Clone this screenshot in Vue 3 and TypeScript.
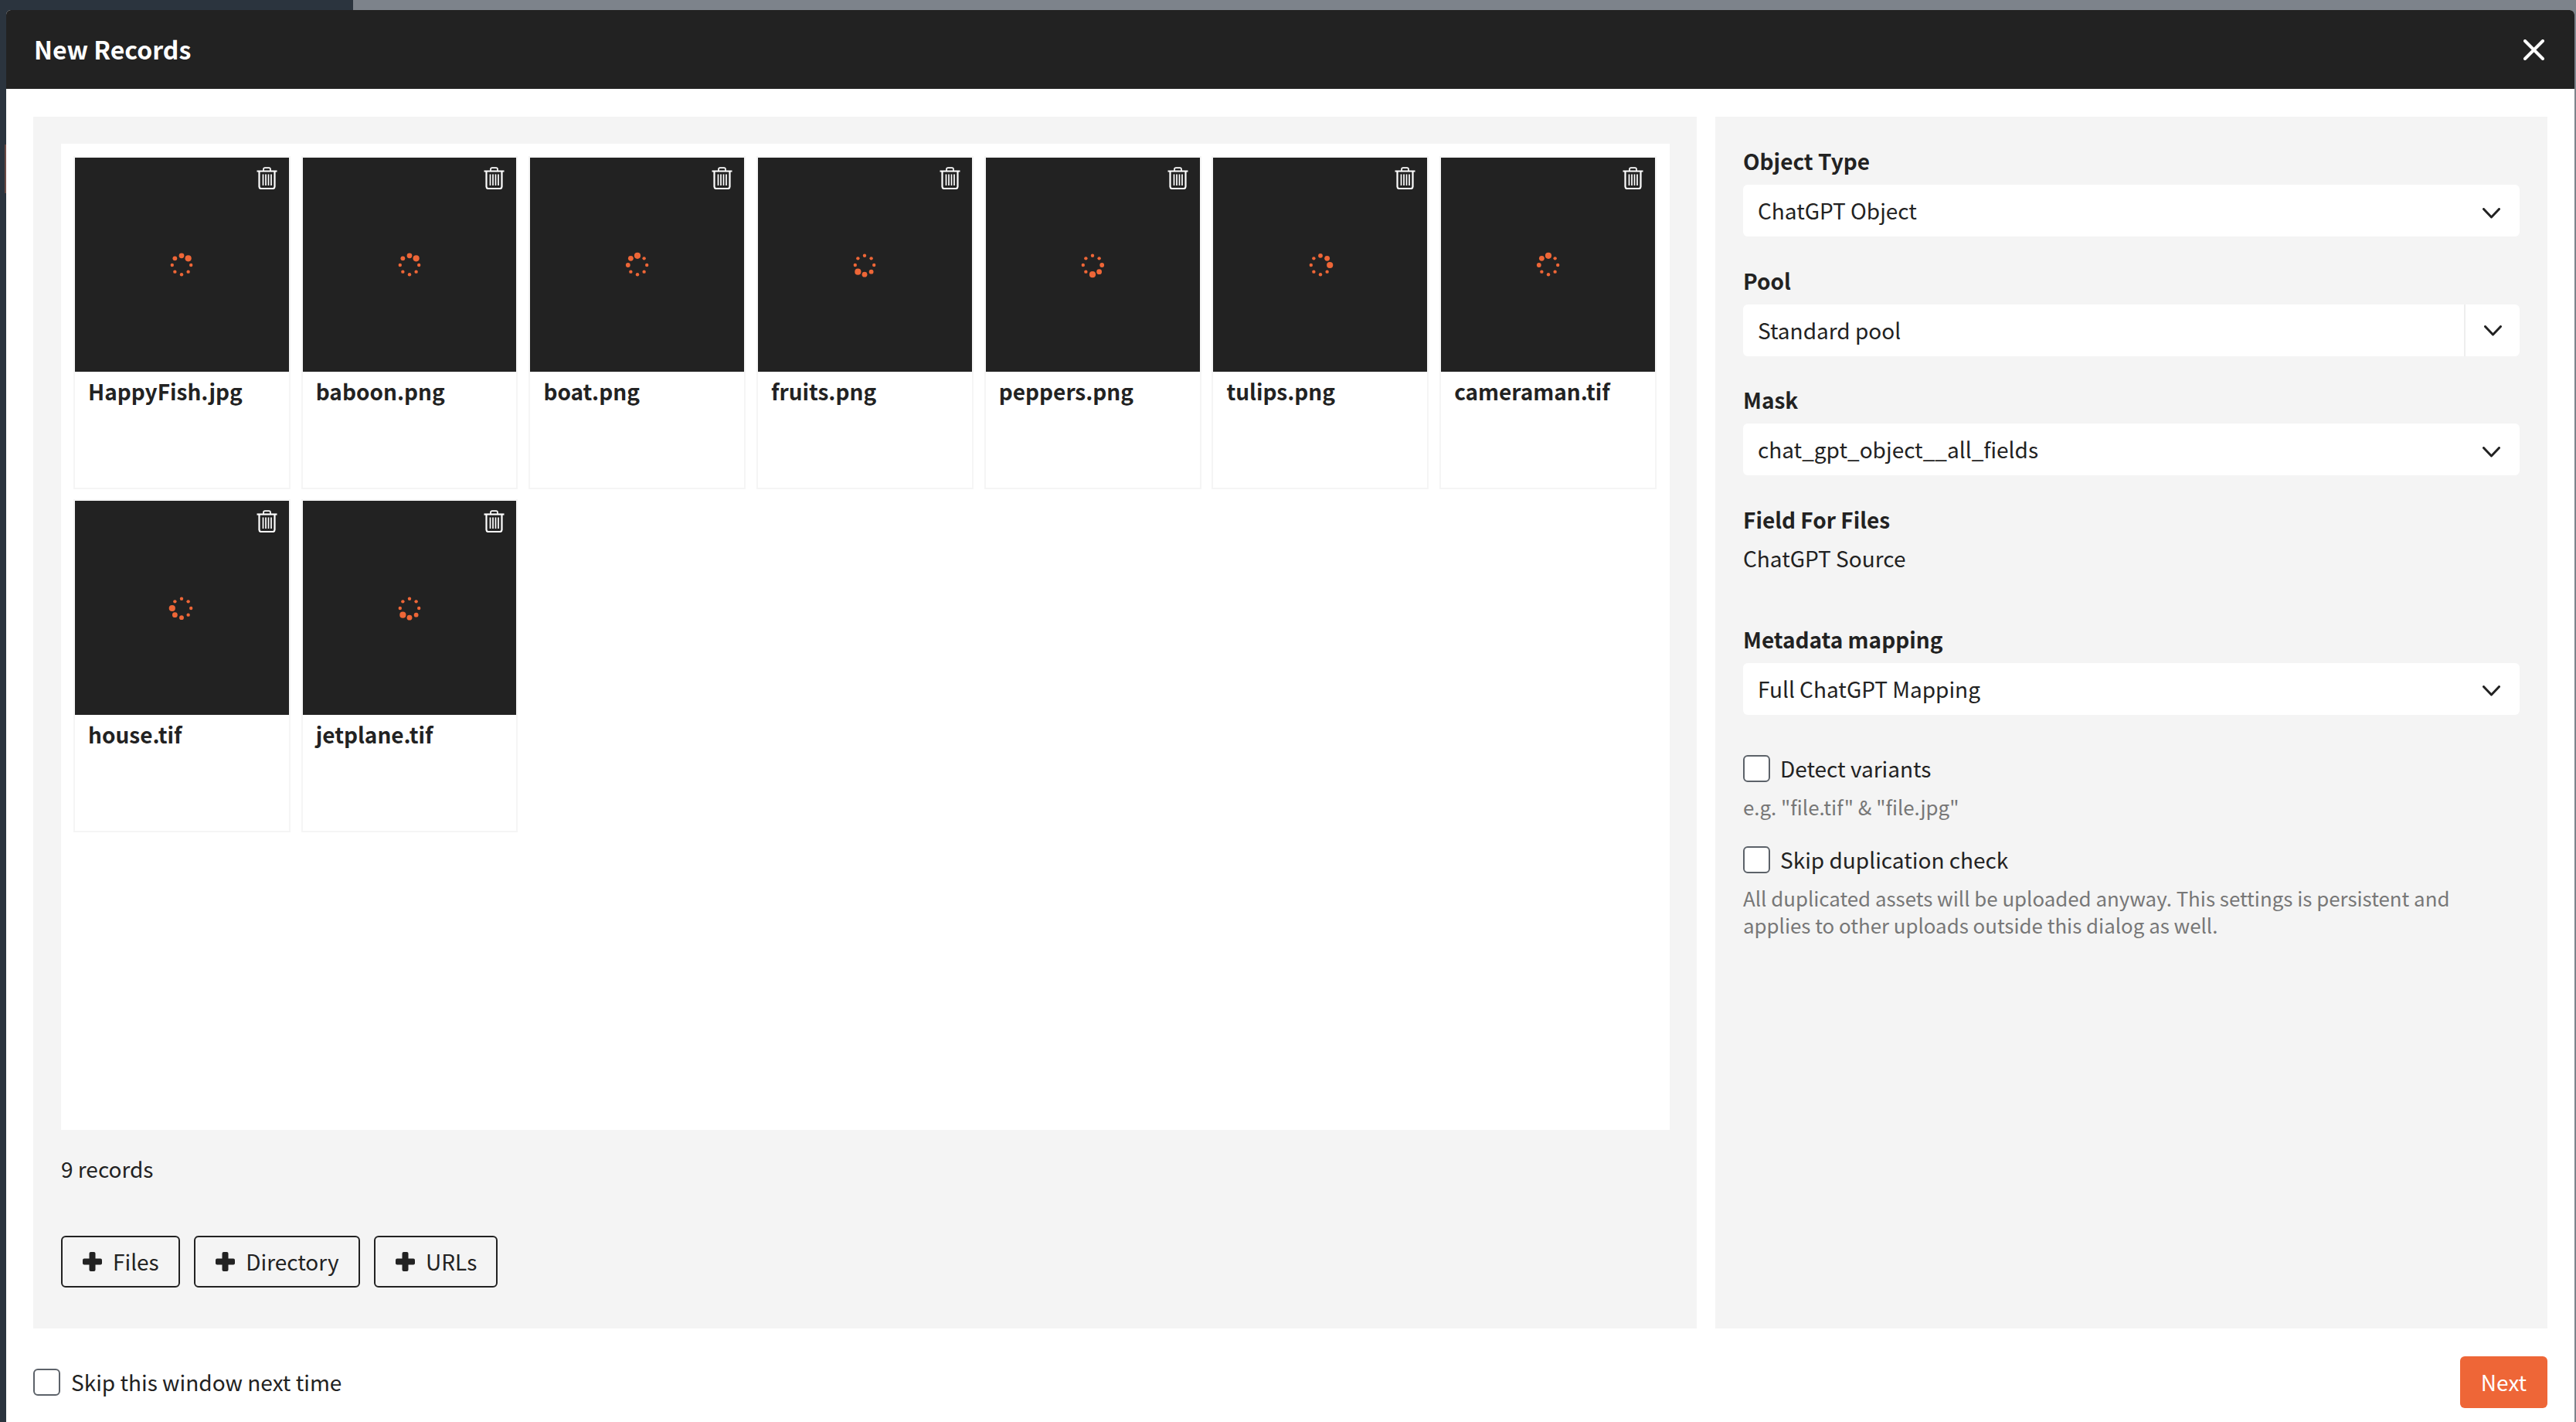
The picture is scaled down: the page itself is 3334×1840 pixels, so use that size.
<template>
  <div class="backdrop">
    <div class="dialog">
      <header class="dialog-head">
        <h1>New Records</h1>
        <svg class="close" viewBox="0 0 27 27" width="27" height="27">
          <path d="M2 2L25 25M25 2L2 25" />
        </svg>
      </header>

      <div class="dialog-body">
        <section class="left">
          <div class="records">
            <div v-for="r in records" :key="r.name" class="card">
              <div class="thumb">
                <svg class="trash" viewBox="0 0 27 29" width="27" height="29">
                  <path class="thin" d="M9 5V3.2Q9 1.2 11 1.2H16Q18 1.2 18 3.2V5" />
                  <path d="M0.5 5.5H26.5" />
                  <path d="M3.5 6V25.5Q3.5 28 6 28H21Q23.5 28 23.5 25.5V6" />
                  <path class="thin" d="M8.5 9.5V24M12 9.5V24M15.5 9.5V24M19 9.5V24" />
                </svg>
                <svg class="spinner" viewBox="-18 -18 36 36" width="36" height="36">
                  <circle
                    v-for="d in spinnerDots(r.head)"
                    :key="d.i"
                    :cx="d.x"
                    :cy="d.y"
                    :r="d.r"
                  />
                </svg>
              </div>
              <div class="name">{{ r.name }}</div>
            </div>
          </div>
          <div class="count">9 records</div>
          <div class="add-row">
            <button v-for="b in addButtons" :key="b" class="add">
              <svg viewBox="0 0 25 25" width="25" height="25">
                <rect x="8.5" y="0" width="8" height="25" rx="2" />
                <rect x="0" y="8.5" width="25" height="8" rx="2" />
              </svg>
              {{ b }}
            </button>
          </div>
        </section>

        <aside class="right">
          <div v-for="f in topSelects" :key="f.label" class="field">
            <label>{{ f.label }}</label>
            <div class="select">
              <span class="value">{{ f.value }}</span>
              <span class="arrow" :class="{ split: f.split }">
                <svg viewBox="0 0 23 14" width="23" height="14"><path d="M1.5 1.5L11.5 12L21.5 1.5" /></svg>
              </span>
            </div>
          </div>

          <div class="field static">
            <label>Field For Files</label>
            <div class="plain">ChatGPT Source</div>
          </div>

          <div class="field mapping">
            <label>Metadata mapping</label>
            <div class="select">
              <span class="value">Full ChatGPT Mapping</span>
              <span class="arrow">
                <svg viewBox="0 0 23 14" width="23" height="14"><path d="M1.5 1.5L11.5 12L21.5 1.5" /></svg>
              </span>
            </div>
          </div>

          <div class="check first">
            <span class="box"></span>
            <span>Detect variants</span>
          </div>
          <p class="hint">e.g. "file.tif" &amp; "file.jpg"</p>

          <div class="check second">
            <span class="box"></span>
            <span>Skip duplication check</span>
          </div>
          <p class="hint">
            All duplicated assets will be uploaded anyway. This settings is persistent and<br />
            applies to other uploads outside this dialog as well.
          </p>
        </aside>
      </div>

      <footer class="dialog-foot">
        <div class="check">
          <span class="box"></span>
          <span>Skip this window next time</span>
        </div>
        <button class="next">Next</button>
      </footer>
    </div>
  </div>
</template>

<script setup lang="ts">
interface RecordItem {
  name: string
  head: number // 0 = top, going clockwise
}

const records: RecordItem[] = [
  { name: 'HappyFish.jpg', head: 1 },
  { name: 'baboon.png', head: 1 },
  { name: 'boat.png', head: 0 },
  { name: 'fruits.png', head: 5 },
  { name: 'peppers.png', head: 4 },
  { name: 'tulips.png', head: 2 },
  { name: 'cameraman.tif', head: 0 },
  { name: 'house.tif', head: 6 },
  { name: 'jetplane.tif', head: 5 }
]

const addButtons = ['Files', 'Directory', 'URLs']

const topSelects = [
  { label: 'Object Type', value: 'ChatGPT Object', split: false },
  { label: 'Pool', value: 'Standard pool', split: true },
  { label: 'Mask', value: 'chat_gpt_object__all_fields', split: false }
]

// spinner frozen at some frame: the head dot is largest, two behind it shrink
const spinnerDots = (head: number) => {
  const sizes = [4.1, 3.4, 2.9]
  return Array.from({ length: 8 }, (_, i) => {
    const behind = (head - i + 8) % 8
    const a = (i * Math.PI) / 4
    return {
      i,
      x: +(Math.sin(a) * 12.2).toFixed(2),
      y: +(-Math.cos(a) * 12.2).toFixed(2),
      r: sizes[behind] ?? 2.2
    }
  })
}
</script>

<style>
body {
  margin: 0;
}
</style>

<style scoped>
.backdrop {
  box-sizing: border-box;
  height: 1840px;
  overflow: hidden;
  padding: 13px 2px 0 8px;
  background:
    linear-gradient(#6b4a45, #6b4a45) 6px 187px / 2px 63px no-repeat,
    linear-gradient(90deg, #2b343e 457px, #7d838b 457px);
  font-family: "Noto Sans CJK SC", "Noto Sans", sans-serif;
  font-size: 28px;
  line-height: 35px;
  color: #222;
}
.dialog {
  height: 100%;
  display: flex;
  flex-direction: column;
  background: #fff;
  border-radius: 6px 6px 0 0;
  overflow: hidden;
}
.dialog-head {
  flex: none;
  box-sizing: border-box;
  height: 102px;
  padding: 0 39px 2px 36px;
  display: flex;
  align-items: center;
  justify-content: space-between;
  background: #222;
}
.close {
  margin-top: 2px;
}
.dialog-head h1 {
  margin: 0;
  font-size: 32px;
  font-weight: 700;
  color: #fff;
}
.close path {
  stroke: #fff;
  stroke-width: 4;
  stroke-linecap: round;
  fill: none;
}
.dialog-body {
  flex: 1;
  min-height: 0;
  display: flex;
  gap: 24px;
  padding: 36px 35px 0;
}
.left {
  flex: 1;
  display: flex;
  flex-direction: column;
  padding: 35px 35px 53px 36px;
  background: #f4f4f4;
}
.records {
  flex: 1;
  display: grid;
  grid-template-columns: repeat(7, 280.8px);
  grid-auto-rows: 431px;
  column-gap: 13.9px;
  row-gap: 13px;
  align-content: start;
  padding: 16px;
  background: #fff;
}
.card {
  border: 2px solid #f5f5f5;
}
.thumb {
  position: relative;
  height: 277px;
  display: flex;
  align-items: center;
  justify-content: center;
  background: #222;
}
.trash {
  position: absolute;
  top: 12px;
  right: 15px;
}
.trash path {
  fill: none;
  stroke: #fff;
  stroke-width: 2.2;
}
.trash path.thin {
  stroke-width: 1.7;
}
.spinner circle {
  fill: #ee6637;
}
.name {
  padding: 8px 17px;
  font-weight: 700;
}
.count {
  margin-top: 33px;
}
.add-row {
  display: flex;
  gap: 18.5px;
  margin-top: 69px;
}
.add {
  box-sizing: border-box;
  height: 67px;
  padding: 0 25px 0 26px;
  display: flex;
  align-items: center;
  gap: 14px;
  background: transparent;
  border: 2px solid #222;
  border-radius: 6px;
  font: inherit;
  color: inherit;
}
.add rect {
  fill: #222;
}
.right {
  flex: none;
  width: 1077px;
  box-sizing: border-box;
  padding: 42px 36px 0;
  background: #f4f4f4;
}
.field {
  margin-bottom: 41.5px;
}
.field label {
  display: block;
  line-height: 31px;
  margin-bottom: 15px;
  font-weight: 700;
}
.select {
  height: 67px;
  display: flex;
  align-items: center;
  line-height: 33px;
  background: #fff;
  border-radius: 6px;
}
.value {
  flex: 1;
  padding-left: 19px;
}
.plain {
  line-height: 33px;
}
.arrow {
  width: 70px;
  height: 100%;
  display: flex;
  align-items: center;
  justify-content: center;
}
.arrow.split {
  border-left: 2px solid #eee;
}
.arrow svg {
  margin: 6px 4px 0 0;
}
.arrow.split svg {
  margin: 1px 0 0;
}
.arrow path {
  fill: none;
  stroke: #222;
  stroke-width: 3;
  stroke-linecap: round;
  stroke-linejoin: round;
}
.static {
  margin-bottom: 73px;
}
.static label {
  margin-bottom: 18px;
}
.mapping {
  margin-bottom: 52px;
}
.check {
  display: flex;
  align-items: center;
  gap: 13px;
  line-height: 33px;
}
.dialog-foot .check {
  gap: 14px;
}
.box {
  box-sizing: border-box;
  width: 35px;
  height: 35px;
  background: #fff;
  border: 2px solid #5c6269;
  border-radius: 6px;
}
.second {
  margin-top: 34px;
}
.hint {
  margin: 14px 0 0;
  font-size: 25.85px;
  color: #777;
}
.dialog-foot {
  flex: none;
  height: 121px;
  box-sizing: border-box;
  padding: 36px 35px 18px;
  display: flex;
  align-items: center;
  justify-content: space-between;
}
.next {
  width: 113px;
  height: 67px;
  background: #ee6637;
  border: 0;
  border-radius: 6px;
  font: inherit;
  color: #fff;
}
</style>
